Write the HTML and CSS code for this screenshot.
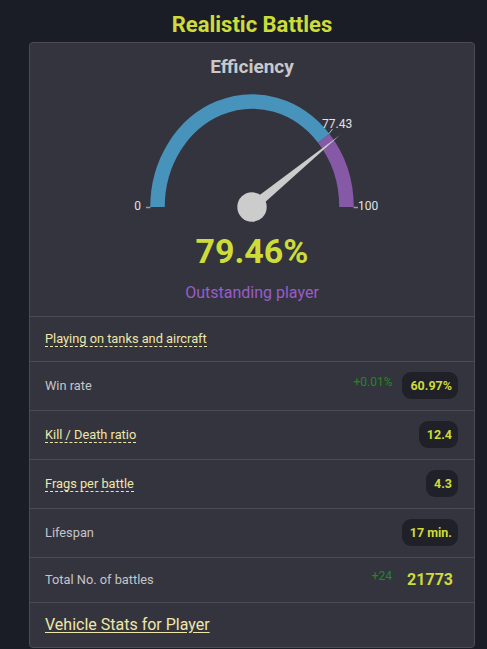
FILE: index.html
```html
<!DOCTYPE html>
<html>
<head>
<meta charset="utf-8">
<link rel="stylesheet" href="styles.css">
</head>
<body>
<div class="wrap">
  <h1 class="title">Realistic Battles</h1>
  <div class="card">
    <div class="eff">
      <div class="eff-title">Efficiency</div>
      <svg class="gauge" width="444" height="150" viewBox="0 0 444 150">
        <path d="M127.5 128 A94.5 105.5 0 0 1 293.75 59.34" fill="none" stroke="#4893bb" stroke-width="14.5"/>
        <path d="M293.75 59.34 A94.5 105.5 0 0 1 316.5 128" fill="none" stroke="#8659a6" stroke-width="14.5"/>
        <line x1="120.5" y1="128.5" x2="116" y2="128.5" stroke="#9a9a9a" stroke-width="1.5"/>
        <line x1="323.5" y1="128.5" x2="328" y2="128.5" stroke="#9a9a9a" stroke-width="1.5"/>
        <line x1="299" y1="54.6" x2="302.5" y2="50" stroke="#bbbbbb" stroke-width="1"/>
        <text class="g-lbl" x="111" y="131" text-anchor="end">0</text>
        <text class="g-lbl" x="328" y="131">100</text>
        <text class="g-lbl" x="292" y="49">77.43</text>
        <polygon points="225.2,131.9 218.8,124.1 310,56" fill="#cccccc"/>
        <circle cx="222" cy="128" r="14.7" fill="#cccccc"/>
      </svg>
      <div class="eff-value">79.46%</div>
      <div class="eff-status">Outstanding player</div>
    </div>
    <div class="row"><div class="label"><span class="dashed">Playing on tanks and aircraft</span></div></div>
    <div class="row"><div class="label">Win rate</div><span class="delta">+0.01%</span><span class="badge">60.97%</span></div>
    <div class="row"><div class="label"><span class="dashed">Kill / Death ratio</span></div><span class="badge">12.4</span></div>
    <div class="row"><div class="label"><span class="dashed">Frags per battle</span></div><span class="badge">4.3</span></div>
    <div class="row"><div class="label">Lifespan</div><span class="badge">17 min.</span></div>
    <div class="row"><div class="label">Total No. of battles</div><span class="delta">+24</span><span class="big">21773</span></div>
    <div class="row"><a class="link" href="#">Vehicle Stats for Player</a></div>
  </div>
</div>
</body>
</html>
```
FILE: styles.css
```css
html, body {
  margin: 0;
  padding: 0;
  background: #1b1d26;
  font-family: Roboto, "Noto Sans", sans-serif;
}
.wrap {
  margin-left: 29px;
  width: 446px;
  padding-top: 11px;
}
.title {
  margin: 0 0 3px;
  text-align: center;
  font-size: 22px;
  line-height: 28px;
  font-weight: 700;
  color: #cddc39;
}
.card {
  box-sizing: border-box;
  width: 446px;
  background: #34343e;
  border: 1px solid #4b4b55;
  border-radius: 4px;
}
.eff {
  padding: 12px 0 12px;
  text-align: center;
}
.eff-title {
  font-size: 19px;
  line-height: 24px;
  font-weight: 700;
  color: #c9c9cb;
}
.gauge {
  display: block;
}
.g-lbl {
  font-family: Roboto, sans-serif;
  font-size: 12px;
  fill: #e2e2e2;
}
.eff-value {
  font-size: 34px;
  line-height: 44px;
  font-weight: 700;
  color: #cddc39;
}
.eff-status {
  margin-top: 9px;
  font-size: 16px;
  line-height: 22px;
  color: #9a5cc8;
}
.row {
  display: flex;
  align-items: center;
  border-top: 1px solid #4b4b55;
  padding: 10px 16px 11px 15px;
  font-size: 12.8px;
  line-height: 23px;
  color: #c4c5cb;
}
.label {
  margin-right: auto;
}
.dashed {
  color: #efe7a8;
  border-bottom: 1px dashed #efe7a8;
}
.delta {
  margin-right: 10px;
  margin-bottom: 6px;
  color: #1f8a1f;
  font-size: 12px;
  line-height: 15px;
}
.badge {
  height: 27px;
  line-height: 27px;
  padding: 0 6px 0 8px;
  border-radius: 9px;
  background: #1f2028;
  color: #cddc39;
  font-weight: 700;
  font-size: 12.5px;
}
.big {
  padding: 0 5px;
  color: #cddc39;
  font-weight: 700;
  font-size: 16px;
}
.link {
  font-size: 16px;
  color: #efe7a8;
  text-decoration: underline;
  text-underline-offset: 2px;
}
```
